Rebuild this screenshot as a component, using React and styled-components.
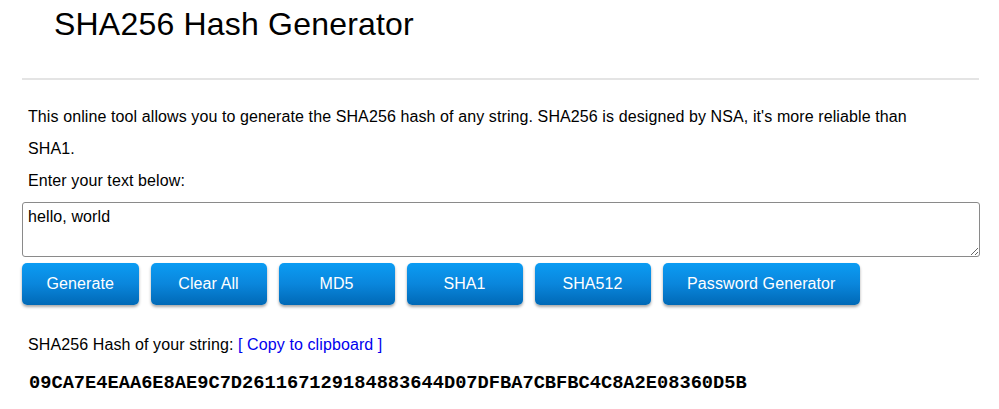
import React from "react";
import styled, { createGlobalStyle } from "styled-components";

const Global = createGlobalStyle`
  html, body { margin: 0; padding: 0; background: #fff; }
  body { font-family: "Liberation Sans", Arial, sans-serif; color: #000; letter-spacing: 0.1px; }
`;

const Page = styled.div`
  width: 957px;
  padding: 0 0 0 22px;
`;

const Title = styled.h1`
  margin: 6px 0 0 32px;
  font-size: 32px;
  line-height: 37px;
  font-weight: normal;
  letter-spacing: 0.2px;
`;

const Rule = styled.hr`
  margin: 35px 0 0 0;
  border: 0;
  height: 2px;
  background: #e4e4e4;
`;

const Text = styled.p`
  margin: 0;
  padding: 0 6px;
  max-width: 920px;
  font-size: 16px;
  line-height: 32px;
`;

const Intro = styled(Text)`
  margin-top: 21px;
`;

const Input = styled.textarea`
  display: block;
  box-sizing: border-box;
  width: 958px;
  height: 55px;
  margin: 5px 0 0 0;
  padding: 4px 5px;
  border: 1px solid #8a8a8a;
  border-radius: 3px;
  font-family: "Liberation Sans", Arial, sans-serif;
  font-size: 16px;
  line-height: 19px;
  letter-spacing: 0.1px;
  color: #000;
  resize: vertical;
  outline: none;
`;

const Buttons = styled.div`
  display: flex;
  gap: 12px;
  margin-top: 6px;
`;

const Button = styled.button`
  box-sizing: border-box;
  min-width: 116px;
  height: 42px;
  padding: 0 24.5px;
  border: 0;
  border-radius: 5px;
  background: linear-gradient(#0b9cf3, #0a86dc 50%, #0069b6);
  box-shadow: 0 2px 3px rgba(0, 0, 0, 0.35);
  color: #fff;
  font-family: "Liberation Sans", Arial, sans-serif;
  font-size: 16px;
  letter-spacing: 0.1px;
  cursor: pointer;
`;

const Result = styled(Text)`
  margin-top: 24px;
`;

const Link = styled.a`
  color: #0000ee;
  text-decoration: none;
`;

const Hash = styled.div`
  margin-top: 6px;
  padding: 0 7px;
  font-family: "Liberation Mono", "Courier New", monospace;
  font-weight: bold;
  font-size: 18.7px;
  line-height: 32px;
  letter-spacing: 0;
`;

const labels = ["Generate", "Clear All", "MD5", "SHA1", "SHA512", "Password Generator"];

export default function App() {
  return (
    <>
      <Global />
      <Page>
        <Title>SHA256 Hash Generator</Title>
        <Rule />
        <Intro>
          This online tool allows you to generate the SHA256 hash of any string. SHA256 is designed by NSA, it's more reliable than SHA1.
        </Intro>
        <Text>Enter your text below:</Text>
        <Input defaultValue="hello, world" />
        <Buttons>
          {labels.map((l) => (
            <Button key={l}>{l}</Button>
          ))}
        </Buttons>
        <Result>
          SHA256 Hash of your string: <Link href="#">[ Copy to clipboard ]</Link>
        </Result>
        <Hash>09CA7E4EAA6E8AE9C7D261167129184883644D07DFBA7CBFBC4C8A2E08360D5B</Hash>
      </Page>
    </>
  );
}
